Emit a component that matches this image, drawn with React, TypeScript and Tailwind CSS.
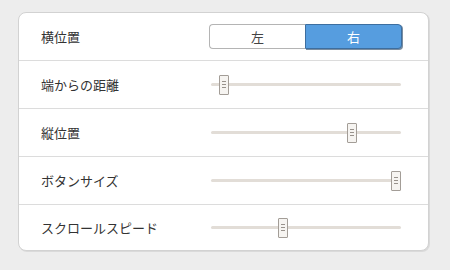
import React from "react";

const rows: { label: string; value?: number }[] = [
  { label: "横位置" },
  { label: "端からの距離", value: 4.4 },
  { label: "縦位置", value: 75.5 },
  { label: "ボタンサイズ", value: 100 },
  { label: "スクロールスピード", value: 37 },
];

function Slider({ value }: { value: number }) {
  return (
    <div className="relative ml-[2px] h-[20px] w-[190px]">
      <div className="absolute left-0 right-0 top-[8px] h-[3px] rounded-full bg-[#e2ddd7]" />
      <div
        className="absolute top-0 flex h-[20px] w-[10px] flex-col items-center justify-center gap-[2px] rounded-[1px] border border-[#a39d97] bg-[#f6f4f1]"
        style={{ left: `${(value / 100) * 180}px` }}
      >
        <span className="block h-px w-[4px] bg-[#98928c]" />
        <span className="block h-px w-[4px] bg-[#98928c]" />
        <span className="block h-px w-[4px] bg-[#98928c]" />
      </div>
    </div>
  );
}

function Segmented() {
  return (
    <div className="flex h-[25px] w-[193px] text-[13px]">
      <div className="flex flex-1 items-center justify-center rounded-l-[4px] border border-r-0 border-[#b4b4b4] bg-white text-[#444]">
        左
      </div>
      <div className="flex flex-1 items-center justify-center rounded-r-[4px] border border-[#3d6e9f] bg-[#569ddf] text-white shadow-[1px_1px_0_#7a8da0]">
        右
      </div>
    </div>
  );
}

export default function App() {
  return (
    <div
      className="h-[270px] w-[450px] bg-[#ededed] pl-[18px] pt-[12px]"
      style={{ fontFamily: '"Noto Sans CJK JP", "Noto Sans", sans-serif' }}
    >
      <div className="w-[411px] overflow-hidden rounded-[8px] border border-[#d2d2d2] bg-white shadow-[1px_1px_0_#dadada]">
        {rows.map((r, i) => {
          const last = i === rows.length - 1;
          return (
            <div
              key={r.label}
              className={`flex items-center ${last ? "h-[45px]" : "h-[48px] border-b border-[#dcdcdc]"}`}
            >
              <div className="flex-1 pl-[22px] text-[13px] text-[#333]">{r.label}</div>
              <div className="mr-[26px] w-[193px]">
                {r.value === undefined ? <Segmented /> : <Slider value={r.value} />}
              </div>
            </div>
          );
        })}
      </div>
    </div>
  );
}
